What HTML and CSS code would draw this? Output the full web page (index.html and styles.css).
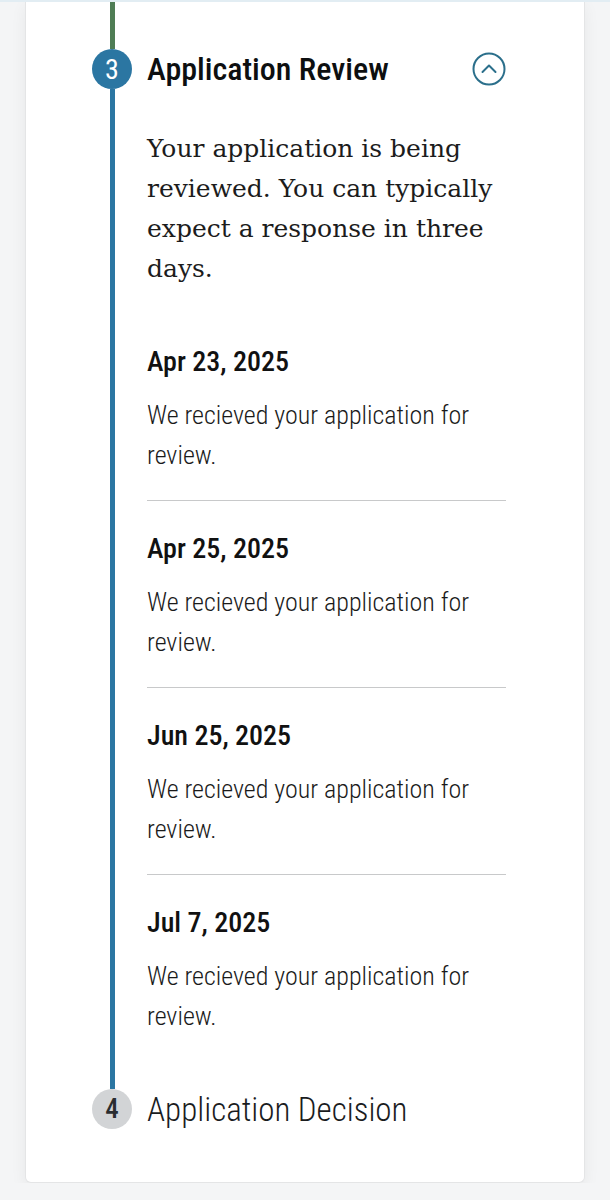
FILE: index.html
```html
<!DOCTYPE html>
<html lang="en">
<head>
    <meta charset="UTF-8">
    <meta name="viewport" content="width=device-width, initial-scale=1.0">
    <title>Application Status</title>
    <link rel="stylesheet" href="styles.css">
</head>
<body>
    <div class="card">
        <div class="step step-current">
            <div class="rail">
                <div class="rail-line done top"></div>
                <div class="badge active">3</div>
                <div class="rail-line active grow"></div>
            </div>
            <div class="step-body">
                <div class="step-header">
                    <h2 class="step-title">Application Review</h2>
                    <button class="toggle" aria-label="Collapse">
                        <svg width="34" height="34" viewBox="0 0 34 34">
                            <circle cx="17" cy="17" r="15.5" fill="none" stroke="#2b6f8b" stroke-width="2"/>
                            <path d="M10.5 20 L17 13.5 L23.5 20" fill="none" stroke="#2b6f8b" stroke-width="2" stroke-linecap="round" stroke-linejoin="round"/>
                        </svg>
                    </button>
                </div>
                <p class="step-text">Your application is being reviewed. You can typically expect a response in three days.</p>
                <div class="events">
                    <div class="event">
                        <div class="event-date">Apr 23, 2025</div>
                        <div class="event-text">We recieved your application for review.</div>
                    </div>
                    <div class="event">
                        <div class="event-date">Apr 25, 2025</div>
                        <div class="event-text">We recieved your application for review.</div>
                    </div>
                    <div class="event">
                        <div class="event-date">Jun 25, 2025</div>
                        <div class="event-text">We recieved your application for review.</div>
                    </div>
                    <div class="event">
                        <div class="event-date">Jul 7, 2025</div>
                        <div class="event-text">We recieved your application for review.</div>
                    </div>
                </div>
            </div>
        </div>
        <div class="step">
            <div class="rail">
                <div class="badge pending">4</div>
            </div>
            <div class="step-body">
                <div class="step-header">
                    <h2 class="step-title light">Application Decision</h2>
                </div>
            </div>
        </div>
    </div>
</body>
</html>
```

FILE: styles.css
```css
body {
    margin: 0;
    background-color: #f4f5f6;
    border-top: 2px solid #e2edf3;
    font-family: "Roboto Condensed", "Liberation Sans", Arial, sans-serif;
    color: #111;
}
.card {
    width: 560px;
    margin: -2px 0 0 25px;
    background-color: #fff;
    border: 1px solid #e4e5e6;
    border-top: none;
    border-radius: 0 0 6px 6px;
    box-shadow: 0 6px 16px rgba(0, 0, 0, 0.06);
    padding: 0 78px 53px 64px;
    box-sizing: border-box;
}
.step {
    display: grid;
    grid-template-columns: 44px 1fr;
    column-gap: 13px;
}
.step-current .step-body {
    padding-bottom: 53px;
}
.rail {
    display: flex;
    flex-direction: column;
    align-items: center;
}
.rail-line {
    width: 5px;
}
.rail-line.top {
    height: 49px;
}
.rail-line.grow {
    flex: 1;
}
.rail-line.done {
    background-color: #4f7d55;
}
.rail-line.active {
    background-color: #2b76a2;
}
.badge {
    width: 40px;
    height: 40px;
    border-radius: 50%;
    display: flex;
    align-items: center;
    justify-content: center;
    font-size: 28px;
    flex-shrink: 0;
}
.badge.active {
    background-color: #2b76a2;
    color: #fff;
}
.badge.pending {
    background-color: #d2d4d6;
    color: #2a2d30;
    font-weight: 500;
    font-size: 27px;
}
.step-current .step-header {
    margin-top: 49px;
}
.step-header {
    display: flex;
    justify-content: space-between;
    align-items: center;
    height: 40px;
}
.step-title {
    margin: 0;
    font-size: 32px;
    font-weight: 500;
    color: #0d0f10;
}
.step-title.light {
    font-size: 33px;
    font-weight: 300;
    color: #1a1c1e;
}
.toggle {
    background: none;
    border: none;
    padding: 0;
    width: 34px;
    height: 34px;
    cursor: pointer;
}
.step-text {
    margin: 40px 0 0;
    font-family: "DejaVu Serif", serif;
    font-size: 25px;
    line-height: 40px;
    color: #1c1c1c;
}
.events {
    margin-top: 55px;
}
.event {
    padding: 30px 0 25px;
    border-bottom: 1px solid #c8c9ca;
}
.event:first-child {
    padding-top: 0;
}
.event:last-child {
    border-bottom: none;
    padding-bottom: 0;
}
.event-date {
    font-size: 28px;
    font-weight: 500;
    line-height: 36px;
    color: #111;
}
.event-text {
    margin-top: 15px;
    font-size: 26px;
    font-weight: 300;
    line-height: 40px;
    color: #1a1a1a;
}
```
